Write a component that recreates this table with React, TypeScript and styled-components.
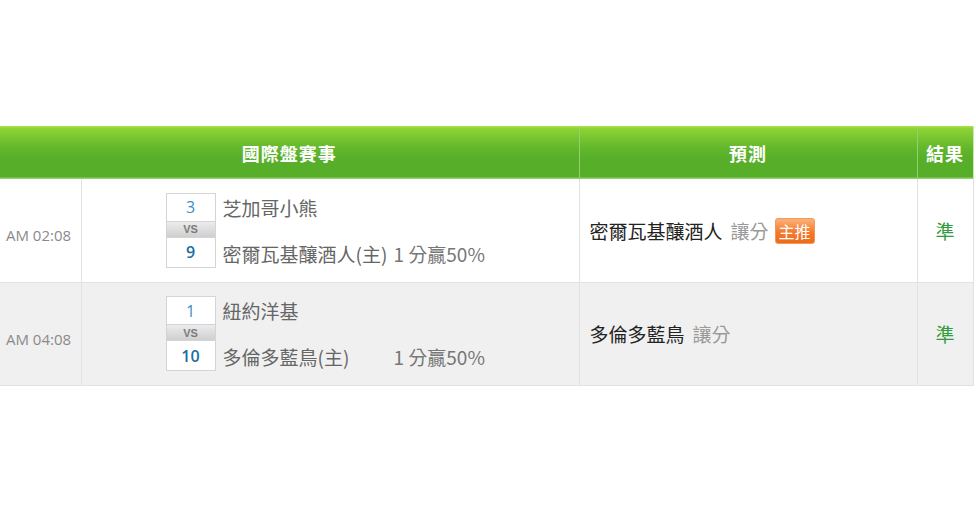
import React from "react";
import styled, { createGlobalStyle } from "styled-components";

const Global = createGlobalStyle`
  html, body { margin: 0; padding: 0; background: #fff; }
  body { font-family: "Noto Sans CJK TC", "Noto Sans", sans-serif; }
`;

const Page = styled.div`
  padding-top: 126px;
  width: 973px;
`;

const Table = styled.table`
  width: 973px;
  border-collapse: collapse;
  table-layout: fixed;
`;

const HeadRow = styled.tr`
  height: 53px;
  background: linear-gradient(to bottom, #a4e04a 0px, #a4e04a 1px, #8fd435 2px, #62b72c 22px, #56ae29 34px, #56ae29 51px, #8fd16a 52px);
`;

const Th = styled.th<{ $last?: boolean }>`
  padding: 0;
  color: #fff;
  font-size: 18px;
  font-weight: 700;
  text-align: center;
  border-right: 1px solid ${(p) => (p.$last ? "#c9e7b3" : "#8fd16a")};
  letter-spacing: 1px;
`;

const Row = styled.tr<{ $alt?: boolean }>`
  height: 103px;
  background: ${(p) => (p.$alt ? "#f0f0f0" : "#fff")};
  border-bottom: 1px solid #e2e2e2;
`;

const Td = styled.td`
  padding: 0;
  border-right: 1px solid #e2e2e2;
  vertical-align: middle;
`;

const TimeCell = styled(Td)`
  font-family: "Open Sans", "Noto Sans", sans-serif;
  font-size: 15px;
  color: #8a8a8a;
  padding-left: 6px;
  padding-top: 10px;
  white-space: nowrap;
`;

const Match = styled.div`
  display: flex;
  align-items: flex-start;
  margin-left: 84px;
  gap: 7px;
`;

const ScoreBox = styled.div`
  width: 48px;
  display: flex;
  flex-direction: column;
  border: 1px solid #d4d4d4;
  background: #fff;
`;

const Score = styled.div<{ $strong?: boolean }>`
  height: ${(p) => (p.$strong ? "29px" : "27px")};
  display: flex;
  align-items: center;
  justify-content: center;
  font-family: "Open Sans", "Noto Sans", sans-serif;
  font-size: 16px;
  color: ${(p) => (p.$strong ? "#1a6ea6" : "#3d8cc4")};
  font-weight: ${(p) => (p.$strong ? 600 : 400)};
`;

const Vs = styled.div`
  height: 15px;
  background: linear-gradient(to bottom, #ececec, #cfcfcf);
  border-top: 1px solid #d4d4d4;
  border-bottom: 1px solid #d4d4d4;
  display: flex;
  align-items: center;
  justify-content: center;
  font-family: "Liberation Sans", Arial, sans-serif;
  font-size: 11px;
  font-weight: 700;
  color: #7a7a7a;
`;

const Names = styled.div`
  display: flex;
  flex-direction: column;
  gap: 18px;
  color: #666;
  font-size: 19px;
  line-height: 28px;
  margin-top: 1px;
`;

const TeamLine = styled.div`
  white-space: nowrap;
`;

const TeamName = styled.span`
  display: inline-block;
  min-width: 167px;
`;

const Handicap = styled.span`
  color: #777;
  margin-left: 4px;
`;

const PredictCell = styled(Td)`
  padding-left: 10px;
  font-size: 19px;
  color: #222;
  white-space: nowrap;
`;

const Muted = styled.span`
  color: #999;
  margin-left: 8px;
`;

const Badge = styled.span`
  display: inline-block;
  margin-left: 6px;
  padding: 0 3px;
  height: 24px;
  line-height: 24px;
  border-radius: 3px;
  border: 1px solid #f29a5a;
  background: linear-gradient(to bottom, #fbb27a 0%, #f47a2c 55%, #ee6a1c 100%);
  color: #fff;
  font-size: 16px;
  vertical-align: 1px;
`;

const ResultCell = styled(Td)`
  text-align: center;
  font-size: 19px;
  color: #2f9b3a;
`;

type MatchData = {
  time: string;
  home: string;
  away: string;
  homeScore: string;
  awayScore: string;
  handicap: string;
  pick: string;
  hot?: boolean;
};

const data: MatchData[] = [
  {
    time: "AM 02:08",
    home: "芝加哥小熊",
    away: "密爾瓦基釀酒人(主)",
    homeScore: "3",
    awayScore: "9",
    handicap: "1 分贏50%",
    pick: "密爾瓦基釀酒人",
    hot: true,
  },
  {
    time: "AM 04:08",
    home: "紐約洋基",
    away: "多倫多藍鳥(主)",
    homeScore: "1",
    awayScore: "10",
    handicap: "1 分贏50%",
    pick: "多倫多藍鳥",
  },
];

export default function App() {
  return (
    <>
      <Global />
      <Page>
        <Table>
          <colgroup>
            <col style={{ width: 81 }} />
            <col style={{ width: 498 }} />
            <col style={{ width: 338 }} />
            <col style={{ width: 56 }} />
          </colgroup>
          <thead>
            <HeadRow>
              <Th colSpan={2}>國際盤賽事</Th>
              <Th>預測</Th>
              <Th $last>結果</Th>
            </HeadRow>
          </thead>
          <tbody>
            {data.map((m, i) => (
              <Row key={i} $alt={i % 2 === 1}>
                <TimeCell>{m.time}</TimeCell>
                <Td>
                  <Match>
                    <ScoreBox>
                      <Score>{m.homeScore}</Score>
                      <Vs>VS</Vs>
                      <Score $strong>{m.awayScore}</Score>
                    </ScoreBox>
                    <Names>
                      <TeamLine>{m.home}</TeamLine>
                      <TeamLine>
                        <TeamName>{m.away}</TeamName>
                        <Handicap>{m.handicap}</Handicap>
                      </TeamLine>
                    </Names>
                  </Match>
                </Td>
                <PredictCell>
                  {m.pick}
                  <Muted>讓分</Muted>
                  {m.hot && <Badge>主推</Badge>}
                </PredictCell>
                <ResultCell>準</ResultCell>
              </Row>
            ))}
          </tbody>
        </Table>
      </Page>
    </>
  );
}
